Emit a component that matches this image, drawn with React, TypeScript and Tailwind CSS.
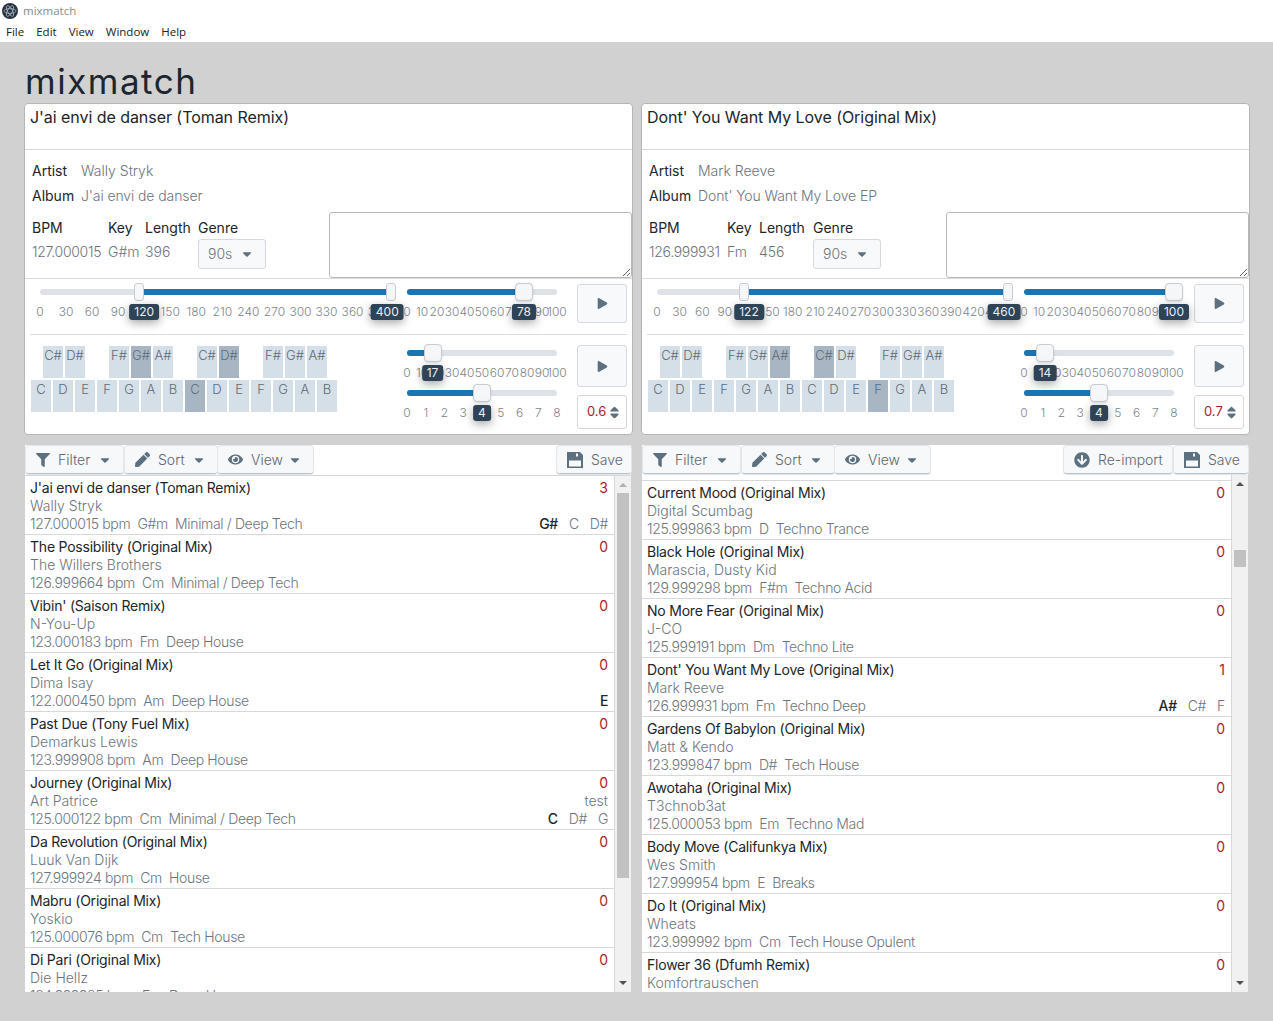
import { ReactNode } from "react";
import { FaArrowCircleDown, FaCaretDown, FaEye, FaFilter, FaPen, FaPlay, FaSort } from "react-icons/fa";

const sharps = ["C#", "D#", null, "F#", "G#", "A#", null, "C#", "D#", null, "F#", "G#", "A#"];
const whites = ["C", "D", "E", "F", "G", "A", "B", "C", "D", "E", "F", "G", "A", "B"];
const percents = [0, 10, 20, 30, 40, 50, 60, 70, 80, 90, 100];
const octaves = [0, 1, 2, 3, 4, 5, 6, 7, 8];

type Track = {
  title: string;
  artist: string;
  meta: string;
  count: number;
  note?: string;
  keys?: string[];
};

const leftTracks: Track[] = [
  { title: "J'ai envi de danser (Toman Remix)", artist: "Wally Stryk", meta: "127.000015 bpm  G#m  Minimal / Deep Tech", count: 3, keys: ["G#", "C", "D#"] },
  { title: "The Possibility (Original Mix)", artist: "The Willers Brothers", meta: "126.999664 bpm  Cm  Minimal / Deep Tech", count: 0 },
  { title: "Vibin' (Saison Remix)", artist: "N-You-Up", meta: "123.000183 bpm  Fm  Deep House", count: 0 },
  { title: "Let It Go (Original Mix)", artist: "Dima Isay", meta: "122.000450 bpm  Am  Deep House", count: 0, keys: ["E"] },
  { title: "Past Due (Tony Fuel Mix)", artist: "Demarkus Lewis", meta: "123.999908 bpm  Am  Deep House", count: 0 },
  { title: "Journey (Original Mix)", artist: "Art Patrice", meta: "125.000122 bpm  Cm  Minimal / Deep Tech", count: 0, note: "test", keys: ["C", "D#", "G"] },
  { title: "Da Revolution (Original Mix)", artist: "Luuk Van Dijk", meta: "127.999924 bpm  Cm  House", count: 0 },
  { title: "Mabru (Original Mix)", artist: "Yoskio", meta: "125.000076 bpm  Cm  Tech House", count: 0 },
  { title: "Di Pari (Original Mix)", artist: "Die Hellz", meta: "124.999985 bpm  Em  Deep House", count: 0 },
];

const rightTracks: Track[] = [
  { title: "Current Mood (Original Mix)", artist: "Digital Scumbag", meta: "125.999863 bpm  D  Techno Trance", count: 0 },
  { title: "Black Hole (Original Mix)", artist: "Marascia, Dusty Kid", meta: "129.999298 bpm  F#m  Techno Acid", count: 0 },
  { title: "No More Fear (Original Mix)", artist: "J-CO", meta: "125.999191 bpm  Dm  Techno Lite", count: 0 },
  { title: "Dont' You Want My Love (Original Mix)", artist: "Mark Reeve", meta: "126.999931 bpm  Fm  Techno Deep", count: 1, keys: ["A#", "C#", "F"] },
  { title: "Gardens Of Babylon (Original Mix)", artist: "Matt & Kendo", meta: "123.999847 bpm  D#  Tech House", count: 0 },
  { title: "Awotaha (Original Mix)", artist: "T3chnob3at", meta: "125.000053 bpm  Em  Techno Mad", count: 0 },
  { title: "Body Move (Califunkya Mix)", artist: "Wes Smith", meta: "127.999954 bpm  E  Breaks", count: 0 },
  { title: "Do It (Original Mix)", artist: "Wheats", meta: "123.999992 bpm  Cm  Tech House Opulent", count: 0 },
  { title: "Flower 36 (Dfumh Remix)", artist: "Komfortrauschen", meta: "125.000000 bpm  Am  Techno", count: 0 },
];

function SaveIcon() {
  return (
    <svg width="16" height="16" viewBox="0 0 16 16" fill="currentColor">
      <path
        fillRule="evenodd"
        d="M0 0H13L16 3V16H0ZM9 1.5V4.5H11V1.5ZM2 8.5V14.500H14V8.5Z"
      />
    </svg>
  );
}

function Tooltip({ left, children }: { left: number; children: ReactNode }) {
  return (
    <div
      className="absolute top-[21px] h-4 -translate-x-1/2 rounded-[3px] bg-[#2f4357] px-[5px] text-xs leading-4 text-[#e8eef3] shadow-[0_3px_10px_rgba(0,0,0,0.35)]"
      style={{ left }}
    >
      {children}
    </div>
  );
}

function Ticks({ items, width }: { items: number[]; width: number }) {
  return (
    <div className="mt-[3px] flex h-4 justify-between" style={{ width }}>
      {items.map((tick) => (
        <div key={tick} className="flex w-0 justify-center text-xs leading-4 font-light text-[#7d858c]">
          {tick}
        </div>
      ))}
    </div>
  );
}

function Slider({ value, ticks }: { value: number; ticks: number[] }) {
  const max = ticks[ticks.length - 1];
  const pos = (value / max) * 150;
  return (
    <div className="relative w-[150px]">
      <div className="flex h-[18px] items-center">
        <div className="h-[6px] w-full overflow-hidden rounded-full bg-[#dee2e6]">
          <div className="h-full bg-[#1b75b3]" style={{ width: pos }} />
        </div>
      </div>
      <div
        className="absolute top-0 h-[18px] w-[18px] -translate-x-1/2 rounded-[4px] border border-[#c8ccd0] bg-[#f4f6f8] shadow-sm"
        style={{ left: pos }}
      />
      <Ticks items={ticks} width={150} />
      <Tooltip left={pos}>{value}</Tooltip>
    </div>
  );
}

function RangeSlider(props: { from: number; to: number; scale: number; lastTick: number }) {
  const { from, to, scale, lastTick } = props;
  const ticks: number[] = [];
  for (let t = 0; t <= lastTick; t += 30) ticks.push(t);
  const start = from * scale;
  const end = to * scale;
  return (
    <div className="relative w-[355px]">
      <div className="flex h-[18px] items-center">
        <div className="relative h-[6px] w-full overflow-hidden rounded-full bg-[#dee2e6]">
          <div className="absolute inset-y-0 bg-[#1b75b3]" style={{ left: start, width: end - start }} />
        </div>
      </div>
      <div
        className="absolute top-0 h-[18px] w-[10px] rounded-[3px] border border-[#c8ccd0] bg-[#f4f6f8]"
        style={{ left: start - 10 }}
      />
      <div
        className="absolute top-0 h-[18px] w-[10px] rounded-[3px] border border-[#c8ccd0] bg-[#f4f6f8]"
        style={{ left: end - 1 }}
      />
      <Ticks items={ticks} width={lastTick * scale} />
      <Tooltip left={start}>{from}</Tooltip>
      <Tooltip left={end}>{to}</Tooltip>
    </div>
  );
}

function PlayButton({ className }: { className: string }) {
  return (
    <button className={`flex w-[50px] items-center justify-center rounded-[3px] border border-[#d5d8dc] bg-[#f8f9fa] text-[#5c7080] ${className}`}>
      <FaPlay size={11} />
    </button>
  );
}

function Keyboard({ activeSharps, activeWhites }: { activeSharps: number[]; activeWhites: number[] }) {
  return (
    <div className="flex w-[306px] flex-col gap-[2px]">
      <div className="flex gap-[2px] pl-3">
        {sharps.map((key, i) =>
          key ? (
            <div
              key={i}
              className={`h-8 w-5 text-center text-[13px] leading-[18px] font-light text-[#5f6b77] ${activeSharps.includes(i) ? "bg-[#a8b6c4]" : "bg-[#d5dfe7]"}`}
            >
              {key}
            </div>
          ) : (
            <div key={i} className="w-5" />
          ),
        )}
      </div>
      <div className="flex gap-[2px]">
        {whites.map((key, i) => (
          <div
            key={i}
            className={`h-8 w-5 text-center text-[13px] leading-[18px] font-light text-[#5f6b77] ${activeWhites.includes(i) ? "bg-[#a8b6c4]" : "bg-[#d5dfe7]"}`}
          >
            {key}
          </div>
        ))}
      </div>
    </div>
  );
}

type DeckProps = {
  title: string;
  artist: string;
  album: string;
  bpm: string;
  songKey: string;
  length: string;
  cols: number[];
  range: { from: number; to: number; scale: number; lastTick: number };
  volume: number;
  pitch: number;
  ratio: string;
  activeSharps: number[];
  activeWhites: number[];
};

function Deck(props: DeckProps) {
  const { cols } = props;
  return (
    <section className="h-[332px] rounded-[4px] border border-[#b5b5b5] bg-white">
      <div className="h-[46px] border-b border-[#d8d8d8] px-[5px] pt-[3px] text-base leading-5 tracking-[-0.05px] text-[#212529]">
        {props.title}
      </div>
      <div className="flex h-[129px] border-b border-[#dcdcdc]">
        <div className="flex-1 pl-[7px] pt-[11px] text-sm leading-5">
          <div className="flex">
            <span className="w-[49px] text-[#212529]">Artist</span>
            <span className="font-light text-[#6c757d]">{props.artist}</span>
          </div>
          <div className="mt-[5px] flex">
            <span className="w-[49px] text-[#212529]">Album</span>
            <span className="font-light tracking-[-0.1px] text-[#6c757d]">{props.album}</span>
          </div>
          <div className="mt-3 flex text-[#212529]">
            <span style={{ width: cols[0] }}>BPM</span>
            <span style={{ width: cols[1] }}>Key</span>
            <span style={{ width: cols[2] }}>Length</span>
            <span>Genre</span>
          </div>
          <div className="mt-px flex items-start font-light text-[#6c757d]">
            <span className="pt-[3px] tracking-[-0.3px]" style={{ width: cols[0] }}>{props.bpm}</span>
            <span className="pt-[3px]" style={{ width: cols[1] }}>{props.songKey}</span>
            <span className="pt-[3px]" style={{ width: cols[2] }}>{props.length}</span>
            <div className="flex h-[30px] w-[68px] items-center justify-between rounded-[3px] border border-[#d5d8dc] bg-[#f8f9fa] pl-[9px] pr-[11px]">
              90s
              <FaCaretDown size={14} className="text-[#5c7080]" />
            </div>
          </div>
        </div>
        <textarea readOnly className="mt-[62px] h-[66px] w-[303px] rounded-[3px] border border-[#b8b8b8] bg-white" />
      </div>
      <div className="flex h-[55px] pl-[15px] pt-1">
        <RangeSlider {...props.range} />
        <div className="ml-3">
          <Slider value={props.volume} ticks={percents} />
        </div>
        <PlayButton className="ml-5 mt-px h-[39px]" />
      </div>
      <div className="mx-[5px] h-px bg-[#dcdcdc]" />
      <div className="flex pl-[6px]">
        <div className="pt-[11px]">
          <Keyboard activeSharps={props.activeSharps} activeWhites={props.activeWhites} />
        </div>
        <div className="ml-[70px] flex flex-col gap-[3px] pt-[9px]">
          <Slider value={props.pitch} ticks={percents} />
          <Slider value={4} ticks={octaves} />
        </div>
        <div className="ml-5 flex flex-col gap-2 pt-[10px]">
          <PlayButton className="h-[42px]" />
          <div className="flex h-[34px] w-[50px] items-center justify-between rounded-[3px] border border-[#d5d8dc] bg-white pl-[9px] pr-[4px] text-[13px] text-[#a71d2a]">
            {props.ratio}
            <FaSort size={15} className="text-[#5c7080]" />
          </div>
        </div>
      </div>
    </section>
  );
}

function ToolButton({ icon, label, caret, className }: { icon: ReactNode; label: string; caret?: boolean; className: string }) {
  return (
    <button className={`flex h-7 items-center rounded-[3px] border-b border-[#b9c1c9] bg-[#f6f8fa] pl-[10px] text-sm font-light text-[#5f6770] shadow-[0_0_0_1px_#e3e7ea] ${className}`}>
      <span className="flex justify-center text-[#5c7080]">{icon}</span>
      <span className="ml-2">{label}</span>
      {caret && <FaCaretDown size={14} className="ml-auto mr-[11px] text-[#5c7080]" />}
    </button>
  );
}

function TrackRow({ track }: { track: Track }) {
  return (
    <div className="flex h-[59px] shrink-0 flex-col border-b border-[#d8d8d8] pl-[5px] pr-[6px] pt-[3px] text-sm leading-[18px]">
      <div className="flex justify-between">
        <span className="tracking-[-0.22px] text-[#212529]">{track.title}</span>
        <span className="text-[#a71d2a]">{track.count}</span>
      </div>
      <div className="flex justify-between font-light text-[#6c757d]">
        <span>{track.artist}</span>
        {track.note && <span>{track.note}</span>}
      </div>
      <div className="flex justify-between font-light tracking-[-0.35px] whitespace-pre text-[#6c757d]">
        <span>{track.meta}</span>
        {track.keys && (
          <span className="flex gap-[11px]">
            {track.keys.map((key, i) => (
              <span key={key} className={i === 0 ? "font-medium text-[#212529]" : ""}>
                {key}
              </span>
            ))}
          </span>
        )}
      </div>
    </div>
  );
}

function Scrollbar({ top, height, upColor }: { top: number; height: number; upColor: string }) {
  return (
    <div className="relative w-[17px] shrink-0 border-l border-[#d8d8d8] bg-[#f1f1f1]">
      <div className="flex h-[17px] justify-center pt-[7px]">
        <div className="h-0 w-0 border-x-[4px] border-b-[4px] border-x-transparent" style={{ borderBottomColor: upColor }} />
      </div>
      <div className="mx-[2px] bg-[#c1c1c1]" style={{ marginTop: top, height }} />
      <div className="absolute bottom-[7px] left-[4px] h-0 w-0 border-x-[4px] border-t-[4px] border-x-transparent border-t-[#505050]" />
    </div>
  );
}

function TrackList({ tracks, reimport, scroll }: { tracks: Track[]; reimport?: boolean; scroll: { top: number; height: number; upColor: string } }) {
  return (
    <section className="flex min-h-0 flex-1 flex-col bg-white">
      <div className={`flex shrink-0 items-start pl-px pt-px ${reimport ? "h-[30px]" : "h-[31px] border-b border-[#d8d8d8]"}`}>
        <ToolButton icon={<FaFilter size={14} />} label="Filter" caret className="w-[97px]" />
        <ToolButton icon={<FaPen size={15} />} label="Sort" caret className="ml-[2px] w-[92px]" />
        <ToolButton icon={<FaEye size={15} />} label="View" caret className="ml-px w-[95px]" />
        <div className="flex-1" />
        {reimport && <ToolButton icon={<FaArrowCircleDown size={16} />} label="Re-import" className="mr-[2px] w-[108px]" />}
        <ToolButton icon={<SaveIcon />} label="Save" className="w-[74px]" />
      </div>
      <div className="flex min-h-0 flex-1">
        <div className="flex flex-1 flex-col overflow-hidden">
          {reimport && <div className="h-[6px] shrink-0 border-b border-[#d8d8d8]" />}
          {tracks.map((track) => (
            <TrackRow key={track.title} track={track} />
          ))}
        </div>
        <Scrollbar {...scroll} />
      </div>
    </section>
  );
}

export default function App() {
  return (
    <div className="flex h-screen flex-col overflow-hidden bg-[#d1d1d1] font-['Inter',sans-serif]">
      <header className="h-[42px] shrink-0 bg-white font-['Open_Sans',sans-serif] text-[11.5px]">
        <div className="flex h-[21px] items-center pl-[2px]">
          <svg width="16" height="16" viewBox="0 0 16 16" fill="none">
            <circle cx="8" cy="8" r="8" fill="#2c3140" />
            <g stroke="#a9c4d0" strokeWidth="0.7">
              <ellipse cx="8" cy="8" rx="6" ry="2.4" />
              <ellipse cx="8" cy="8" rx="6" ry="2.4" transform="rotate(60 8 8)" />
              <ellipse cx="8" cy="8" rx="6" ry="2.4" transform="rotate(120 8 8)" />
            </g>
          </svg>
          <span className="ml-[5px] text-[#8a8a8a]">mixmatch</span>
        </div>
        <nav className="flex h-[21px] items-center gap-3 pl-[6px] text-[#222]">
          <span>File</span>
          <span>Edit</span>
          <span>View</span>
          <span>Window</span>
          <span>Help</span>
        </nav>
      </header>
      <div className="flex min-h-0 flex-1 flex-col pb-[29px] pl-6 pr-[23px]">
        <h1 className="flex h-[61px] shrink-0 items-end pl-px text-[35px] leading-[44px] font-normal tracking-[1.5px] text-[#1b2630]">
          mixmatch
        </h1>
        <div className="grid min-h-0 flex-1 grid-cols-2 grid-rows-[332px_minmax(0,1fr)] gap-x-2 gap-y-[10px]">
          <Deck
            title="J'ai envi de danser (Toman Remix)"
            artist="Wally Stryk"
            album="J'ai envi de danser"
            bpm="127.000015"
            songKey="G#m"
            length="396"
            cols={[76, 37, 53]}
            range={{ from: 120, to: 400, scale: 0.8683, lastTick: 390 }}
            volume={78}
            pitch={17}
            ratio="0.6"
            activeSharps={[4, 8]}
            activeWhites={[7]}
          />
          <Deck
            title="Dont' You Want My Love (Original Mix)"
            artist="Mark Reeve"
            album="Dont' You Want My Love EP"
            bpm="126.999931"
            songKey="Fm"
            length="456"
            cols={[78, 32, 54]}
            range={{ from: 122, to: 460, scale: 0.754, lastTick: 450 }}
            volume={100}
            pitch={14}
            ratio="0.7"
            activeSharps={[5, 7]}
            activeWhites={[10]}
          />
          <div className="flex min-h-0 pl-px pr-[2px]">
            <TrackList tracks={leftTracks} scroll={{ top: 0, height: 385, upColor: "#b0b0b0" }} />
          </div>
          <div className="flex min-h-0 pl-px pr-[2px]">
            <TrackList tracks={rightTracks} reimport scroll={{ top: 58, height: 17, upColor: "#505050" }} />
          </div>
        </div>
      </div>
    </div>
  );
}
